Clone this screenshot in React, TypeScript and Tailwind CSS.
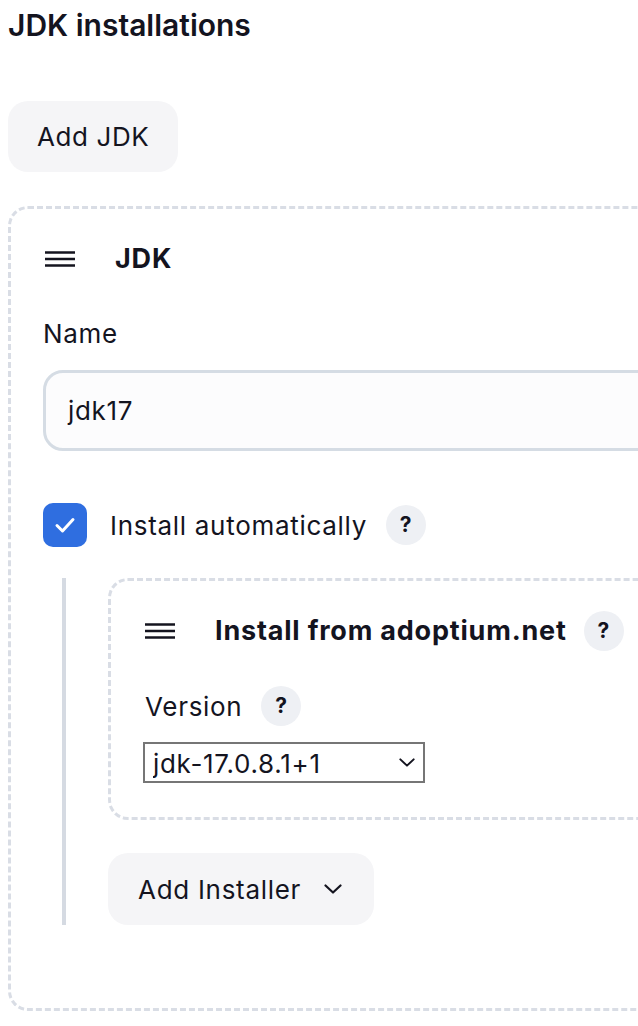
const font = { fontFamily: "Inter, 'Noto Sans', sans-serif" }

function Handle() {
  return (
    <svg width="30" height="16" viewBox="0 0 30 16" className="shrink-0">
      <path d="M0 1.5h30M0 8h30M0 14.5h30" stroke="#14141f" strokeWidth="2.5" />
    </svg>
  )
}

function Help() {
  return (
    <span className="flex h-[40px] w-[40px] shrink-0 items-center justify-center rounded-full bg-[#eef0f4] text-[21px] font-bold text-[#14141f]">
      ?
    </span>
  )
}

function Chevron({ className }: { className?: string }) {
  return (
    <svg width="18" height="10" viewBox="0 0 18 10" className={className}>
      <path d="M1.5 1.5L9 8.5l7.5-7" fill="none" stroke="#14141f" strokeWidth="2.2" strokeLinecap="round" strokeLinejoin="round" />
    </svg>
  )
}

export default function App() {
  return (
    <div className="min-h-screen w-[638px] overflow-hidden bg-white pl-2 pt-[5px] text-[#14141f]" style={font}>
      <h1 className="text-[30px] font-semibold leading-[40px]">JDK installations</h1>

      <button className="mt-[56px] flex h-[71px] items-center rounded-[20px] bg-[#f5f5f7] px-[29px] text-[26px] tracking-[0.6px]">
        Add JDK
      </button>

      <div className="mt-[34px] w-[720px] rounded-[20px] border-[3px] border-dashed border-[#d9dde5] pb-[83px] pl-[32px] pt-[30px] tracking-[0.7px]">
        <div className="flex h-[40px] items-center gap-[40px] pl-[2px]">
          <Handle />
          <span className="text-[27px] font-bold tracking-[0.8px]">JDK</span>
        </div>

        <div className="mt-[37px] text-[26px] leading-[36px]">Name</div>
        <div className="mt-[18px] flex h-[81px] items-center rounded-[20px] border-[3px] border-[#d5dce4] bg-[#fcfcfd] pl-[22px] text-[26px]">
          jdk17
        </div>

        <div className="mt-[52px] flex items-center">
          <span className="flex h-[44px] w-[44px] items-center justify-center rounded-[10px] bg-[#2f6ee0]">
            <svg width="22" height="18" viewBox="0 0 22 18">
              <path d="M3 9.5l5.5 5.5L19 3.5" fill="none" stroke="#fff" strokeWidth="3" strokeLinecap="round" strokeLinejoin="round" />
            </svg>
          </span>
          <span className="ml-[23px] text-[26px]">Install automatically</span>
          <span className="ml-[19px]">
            <Help />
          </span>
        </div>

        <div className="ml-[19px] mt-[31px] border-l-[4px] border-[#d5dae2] pl-[42px]">
          <div className="rounded-[20px] border-[3px] border-dashed border-[#d9dde5] pb-[34px] pl-[34px] pt-[30px]">
            <div className="flex h-[40px] items-center gap-[40px]">
              <Handle />
              <span className="text-[27px] font-bold tracking-[0.8px]">Install from adoptium.net</span>
              <span className="-ml-[23px]">
                <Help />
              </span>
            </div>
            <div className="mt-[35px] flex items-center gap-[19px]">
              <span className="text-[26px]">Version</span>
              <Help />
            </div>
            <div className="relative -ml-[2px] mt-[16px] w-[282px]">
              <select className="h-[41px] w-full appearance-none rounded-none border-2 border-[#767676] bg-white pl-[8px] text-[26px] tracking-[0.7px] outline-none">
                <option>jdk-17.0.8.1+1</option>
              </select>
              <Chevron className="pointer-events-none absolute right-[10px] top-[16px] h-[9px] w-[16px]" />
            </div>
          </div>

          <button className="mt-[33px] flex h-[72px] items-center gap-[23px] rounded-[20px] bg-[#f5f5f7] pl-[30px] pr-[32px] text-[26px]">
            Add Installer
            <Chevron />
          </button>
        </div>
      </div>
    </div>
  )
}
